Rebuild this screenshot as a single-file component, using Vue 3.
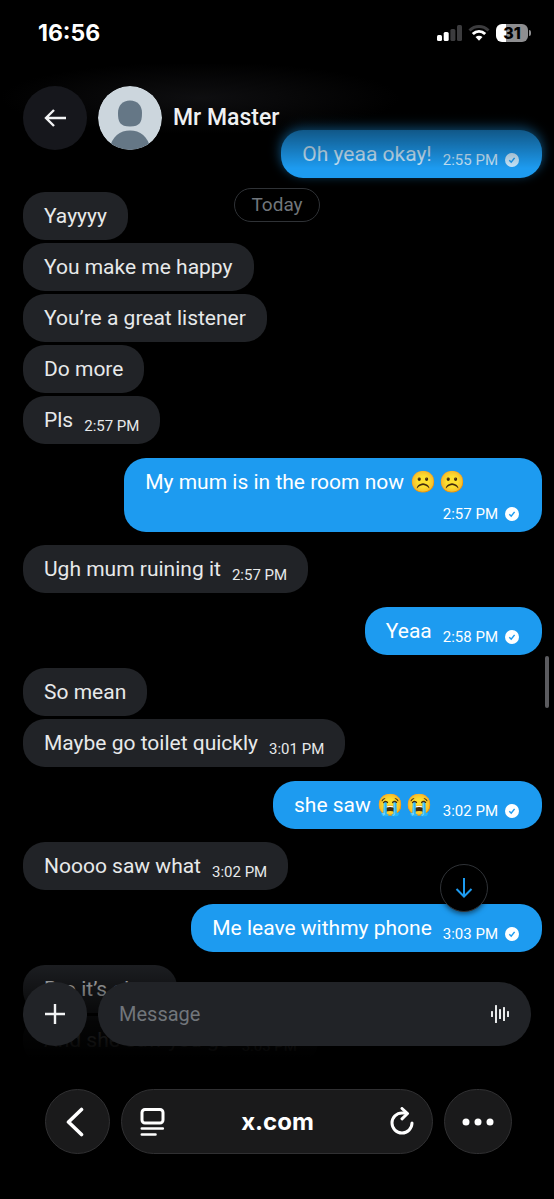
<script setup>
const messages = [
  { side: 'out', text: 'Oh yeaa okay!', time: '2:55 PM', glow: true },
  { side: 'in', text: 'Yayyyy', group: true },
  { side: 'in', text: 'You make me happy' },
  { side: 'in', text: 'You’re a great listener' },
  { side: 'in', text: 'Do more' },
  { side: 'in', text: 'Pls', time: '2:57 PM' },
  { side: 'out', text: 'My mum is in the room now', emoji: ['☹️', '☹️'], time: '2:57 PM', group: true },
  { side: 'in', text: 'Ugh mum ruining it', time: '2:57 PM', group: true },
  { side: 'out', text: 'Yeaa', time: '2:58 PM', group: true },
  { side: 'in', text: 'So mean', group: true },
  { side: 'in', text: 'Maybe go toilet quickly', time: '3:01 PM' },
  { side: 'out', text: 'she saw', emoji: ['😭', '😭'], time: '3:02 PM', group: true },
  { side: 'in', text: 'Noooo saw what', time: '3:02 PM', group: true },
  { side: 'out', text: 'Me leave withmy phone', time: '3:03 PM', group: true },
  { side: 'in', text: 'Bro it’s okay', group: true },
  { side: 'in', text: 'And she saw you go', time: '3:03 PM' },
]
</script>

<template>
  <div class="phone">
    <div class="status">
      <span class="clock">16:56</span>
      <div class="indicators">
        <svg width="25" height="16" viewBox="0 0 25 16" aria-hidden="true">
          <rect x="0" y="10" width="5" height="6" rx="1.5" fill="#fff" />
          <rect x="6.7" y="7" width="5" height="9" rx="1.5" fill="#fff" />
          <rect x="13.4" y="4" width="5" height="12" rx="1.5" fill="#3c3c3e" />
          <rect x="20" y="0" width="5" height="16" rx="1.5" fill="#3c3c3e" />
        </svg>
        <svg width="22" height="16" viewBox="0 0 22 16" fill="none" aria-hidden="true">
          <path d="M1.500 5.500C7 .3 15 .3 20.500 5.500" stroke="#3c3c3e" stroke-width="3" />
          <path d="M4.800 9C8.500 5.500 13.500 5.500 17.200 9" stroke="#fff" stroke-width="3" />
          <path d="M7.500 12C9.500 10.200 12.500 10.200 14.500 12L11 15.800Z" fill="#fff" />
        </svg>
        <div class="battery"><span>31</span></div>
      </div>
    </div>

    <main class="chat">
      <div class="thread">
        <div
          v-for="(m, i) in messages"
          :key="i"
          class="bubble"
          :class="[m.side, { group: m.group, glow: m.glow }]"
        >
          <span class="text">{{ m.text }}<span v-if="m.emoji" class="emoji"><span v-for="(e, j) in m.emoji" :key="j">{{ e }}</span></span></span>
          <span v-if="m.time" class="meta">
            {{ m.time }}
            <svg v-if="m.side === 'out'" width="14" height="14" viewBox="0 0 14 14" aria-hidden="true">
              <circle cx="7" cy="7" r="7" fill="currentColor" />
              <path d="M4.300 7.300L6.200 9.200L9.600 4.900" fill="none" stroke="#1d9bf0" stroke-width="1.500" />
            </svg>
          </span>
        </div>
      </div>

      <div class="day"><span>Today</span></div>

      <header class="header">
        <button class="round back" aria-label="Back">
          <svg width="22" height="18" viewBox="0 0 22 18" fill="none" stroke="#f2f3f4" stroke-width="2.400">
            <path d="M22 9H2M10 1L2 9L10 17" />
          </svg>
        </button>
        <svg class="avatar" width="64" height="64" viewBox="0 0 64 64" role="img" aria-label="Profile picture">
          <defs><clipPath id="face"><circle cx="32" cy="32" r="32" /></clipPath></defs>
          <g clip-path="url(#face)">
            <rect width="64" height="64" fill="#ccd6dd" />
            <path d="M32 14.500C39.500 14.500 44 19.500 44 27C44 36 42 40.500 32 40.500C22 40.500 20 36 20 27C20 19.500 24.500 14.500 32 14.500Z" fill="#657786" />
            <path d="M11 64C14 50 22 44.500 32 44.500C42 44.500 50 50 53 64Z" fill="#657786" />
          </g>
        </svg>
        <h1 class="name">Mr Master</h1>
      </header>

      <button class="jump" aria-label="Scroll to latest">
        <svg width="18" height="20" viewBox="0 0 18 20" fill="none" stroke="#1d9bf0" stroke-width="2">
          <path d="M9 0V18M1.500 11L9 18.500L16.500 11" />
        </svg>
      </button>
      <div class="scrollbar"></div>

      <form class="composer" @submit.prevent>
        <button type="button" class="round add" aria-label="Add attachment">
          <svg width="20" height="20" viewBox="0 0 20 20" stroke="#f2f3f4" stroke-width="2.400">
            <path d="M10 0V20M0 10H20" />
          </svg>
        </button>
        <div class="field">
          <input type="text" placeholder="Message" aria-label="Message" />
          <button type="button" class="voice" aria-label="Record voice message">
            <svg width="18" height="18" viewBox="0 0 18 18" fill="#e7e9ea">
              <rect x="0" y="6" width="2" height="6" rx=".5" />
              <rect x="4" y="0" width="2" height="18" rx=".5" />
              <rect x="8" y="4" width="2" height="10" rx=".5" />
              <rect x="12" y="2" width="2" height="14" rx=".5" />
              <rect x="16" y="6" width="2" height="6" rx=".5" />
            </svg>
          </button>
        </div>
      </form>
    </main>

    <nav class="browser">
      <button class="glass side" aria-label="Previous page">
        <svg width="24" height="30" viewBox="0 0 24 30" fill="none" stroke="#fff" stroke-width="3.600" stroke-linecap="round" stroke-linejoin="round">
          <path d="M15.500 2.500L2.500 15L15.500 27.500" />
        </svg>
      </button>
      <div class="glass address">
        <button aria-label="Page menu">
          <svg width="25" height="28" viewBox="0 0 25 28" fill="none" stroke="#fff" stroke-width="3" stroke-linecap="round">
            <rect x="2" y="1.500" width="21" height="13.500" rx="3" />
            <path d="M1.800 20.500H22.800M1.800 26.500H15.500" stroke-width="2.600" />
          </svg>
        </button>
        <a href="#" class="url">x.com</a>
        <button aria-label="Reload">
          <svg width="24" height="30" viewBox="0 0 24 30" fill="none" stroke="#fff" stroke-width="3" stroke-linecap="round" stroke-linejoin="round">
            <path d="M22 16A10 10 0 1 1 12 6H16" />
            <path d="M12 1.500L17.500 6.500L12 11.800" />
          </svg>
        </button>
      </div>
      <button class="glass side more" aria-label="More">
        <svg width="32" height="8" viewBox="0 0 32 8" fill="#fff">
          <circle cx="4" cy="4" r="3.500" /><circle cx="16" cy="4" r="3.500" /><circle cx="28" cy="4" r="3.500" />
        </svg>
      </button>
    </nav>
  </div>
</template>

<style>
html, body { background: #000; }
</style>

<style scoped>
* { box-sizing: border-box; }
.phone {
  height: 100vh;
  display: flex;
  flex-direction: column;
  overflow: hidden;
  background: #000;
  color: #e7e9ea;
  font-family: Roboto, "Liberation Sans", sans-serif;
}
button {
  padding: 0;
  border: 0;
  background: none;
  color: inherit;
  display: flex;
  align-items: center;
  justify-content: center;
}
svg { display: block; flex: none; }
.status {
  flex: none;
  height: 64px;
  padding: 2px 23px 0 38px;
  display: flex;
  align-items: center;
  justify-content: space-between;
}
.clock { font: 700 23px/28px Inter, sans-serif; color: #fff; }
.indicators { display: flex; align-items: center; gap: 6px; }
.battery {
  position: relative;
  width: 32px;
  height: 18px;
  margin-right: 3px;
  border-radius: 6px;
  background: linear-gradient(90deg, #fff 31%, #8e8e90 31%);
  font: 800 16px/18px Inter, sans-serif;
  text-align: center;
  color: #000;
}
.battery::after {
  content: "";
  position: absolute;
  right: -3px;
  top: 6px;
  width: 2px;
  height: 6px;
  border-radius: 0 2px 2px 0;
  background: #8e8e90;
}
.chat { position: relative; flex: 1; min-height: 0; overflow: hidden; }
.thread {
  display: flex;
  flex-direction: column;
  align-items: flex-start;
  gap: 3px;
  padding: 66px 12px 0 23px;
}
.bubble {
  flex: none;
  display: flex;
  flex-wrap: wrap;
  gap: 10px 11px;
  min-height: 48px;
  max-width: 80.5%;
  padding: 12px 21px 8px;
  border-radius: 22px;
  background: #212327;
}
.bubble.group { margin-top: 10px; }
.bubble.out { align-self: flex-end; background: #1d9bf0; color: #fff; }
.bubble.glow { box-shadow: 0 -4px 12px rgba(29, 155, 240, .7); color: rgba(255, 255, 255, .75); }
.text { font-size: 21px; line-height: 24px; }
.emoji {
  display: inline-flex;
  gap: 3px;
  margin-left: 6px;
  font-size: 21px;
  line-height: 24px;
}
.meta {
  margin-left: auto;
  align-self: flex-end;
  display: flex;
  align-items: center;
  gap: 7px;
  font-size: 15px;
  line-height: 20px;
}
.bubble.out { padding-right: 23px; }
.day {
  position: absolute;
  top: 124px;
  left: 0;
  right: 0;
  display: flex;
  justify-content: center;
}
.day span {
  padding: 0 16px;
  border: 1px solid #2f3236;
  border-radius: 17px;
  font-size: 19px;
  line-height: 32px;
  color: #71767b;
}
.bubble.group.in + .bubble.group.out,
.bubble.in + .bubble.group.out,
.bubble.glow + .bubble.group { margin-top: 11px; }
.header {
  position: absolute;
  inset: 0 0 auto;
  height: 116px;
  padding: 22px 23px 0;
  display: flex;
  align-items: flex-start;
  gap: 11px;
  background:
    radial-gradient(ellipse 200px 36px at 200px 34px, rgba(32, 32, 36, .45), transparent),
    linear-gradient(#000 25%, rgba(0, 0, 0, .42) 58%, transparent 90%);
}
.round { flex: none; width: 64px; height: 64px; border-radius: 50%; }
.back { background: #16171c; }
.avatar { border-radius: 50%; }
.name { margin: 0; font-size: 23px; line-height: 64px; font-weight: 500; color: #eff1f2; }
.jump {
  position: absolute;
  right: 66px;
  bottom: 148px;
  width: 48px;
  height: 48px;
  border: 1px solid #2f3236;
  border-radius: 50%;
  background: #000;
  box-shadow: 0 2px 5px rgba(0, 0, 0, .5);
}
.scrollbar {
  position: absolute;
  right: 5px;
  top: 592px;
  width: 4px;
  height: 52px;
  border-radius: 2px;
  background: #5b5b5f;
}
.composer {
  position: absolute;
  inset: auto 0 0;
  padding: 18px 23px 14px;
  display: flex;
  gap: 11px;
  background: linear-gradient(rgba(0, 0, 0, .15), rgba(0, 0, 0, .85) 60%, #000 98%);
}
.add { background: #212327; }
.field {
  flex: 1;
  min-width: 0;
  display: flex;
  align-items: center;
  padding: 0 22px 0 21px;
  border-radius: 32px;
  background: #212327;
}
.field input {
  flex: 1;
  min-width: 0;
  padding: 0;
  border: 0;
  outline: 0;
  background: none;
  color: #e7e9ea;
  font: 20px/28px Roboto, "Liberation Sans", sans-serif;
}
.field input::placeholder { color: #71767b; opacity: 1; }
.browser {
  flex: none;
  height: 139px;
  padding: 29px 42px 0 45px;
  display: flex;
  align-items: flex-start;
  gap: 11px;
}
.glass { height: 65px; border: 1px solid #303032; border-radius: 33px; background: #1a1a1b; }
.side { flex: none; width: 65px; }
.more { width: 68px; }
.address {
  flex: 1;
  min-width: 0;
  display: flex;
  align-items: center;
  justify-content: space-between;
  padding: 0 18px;
}
.url { color: #fff; text-decoration: none; font: 700 24px/32px Inter, sans-serif; }
</style>
